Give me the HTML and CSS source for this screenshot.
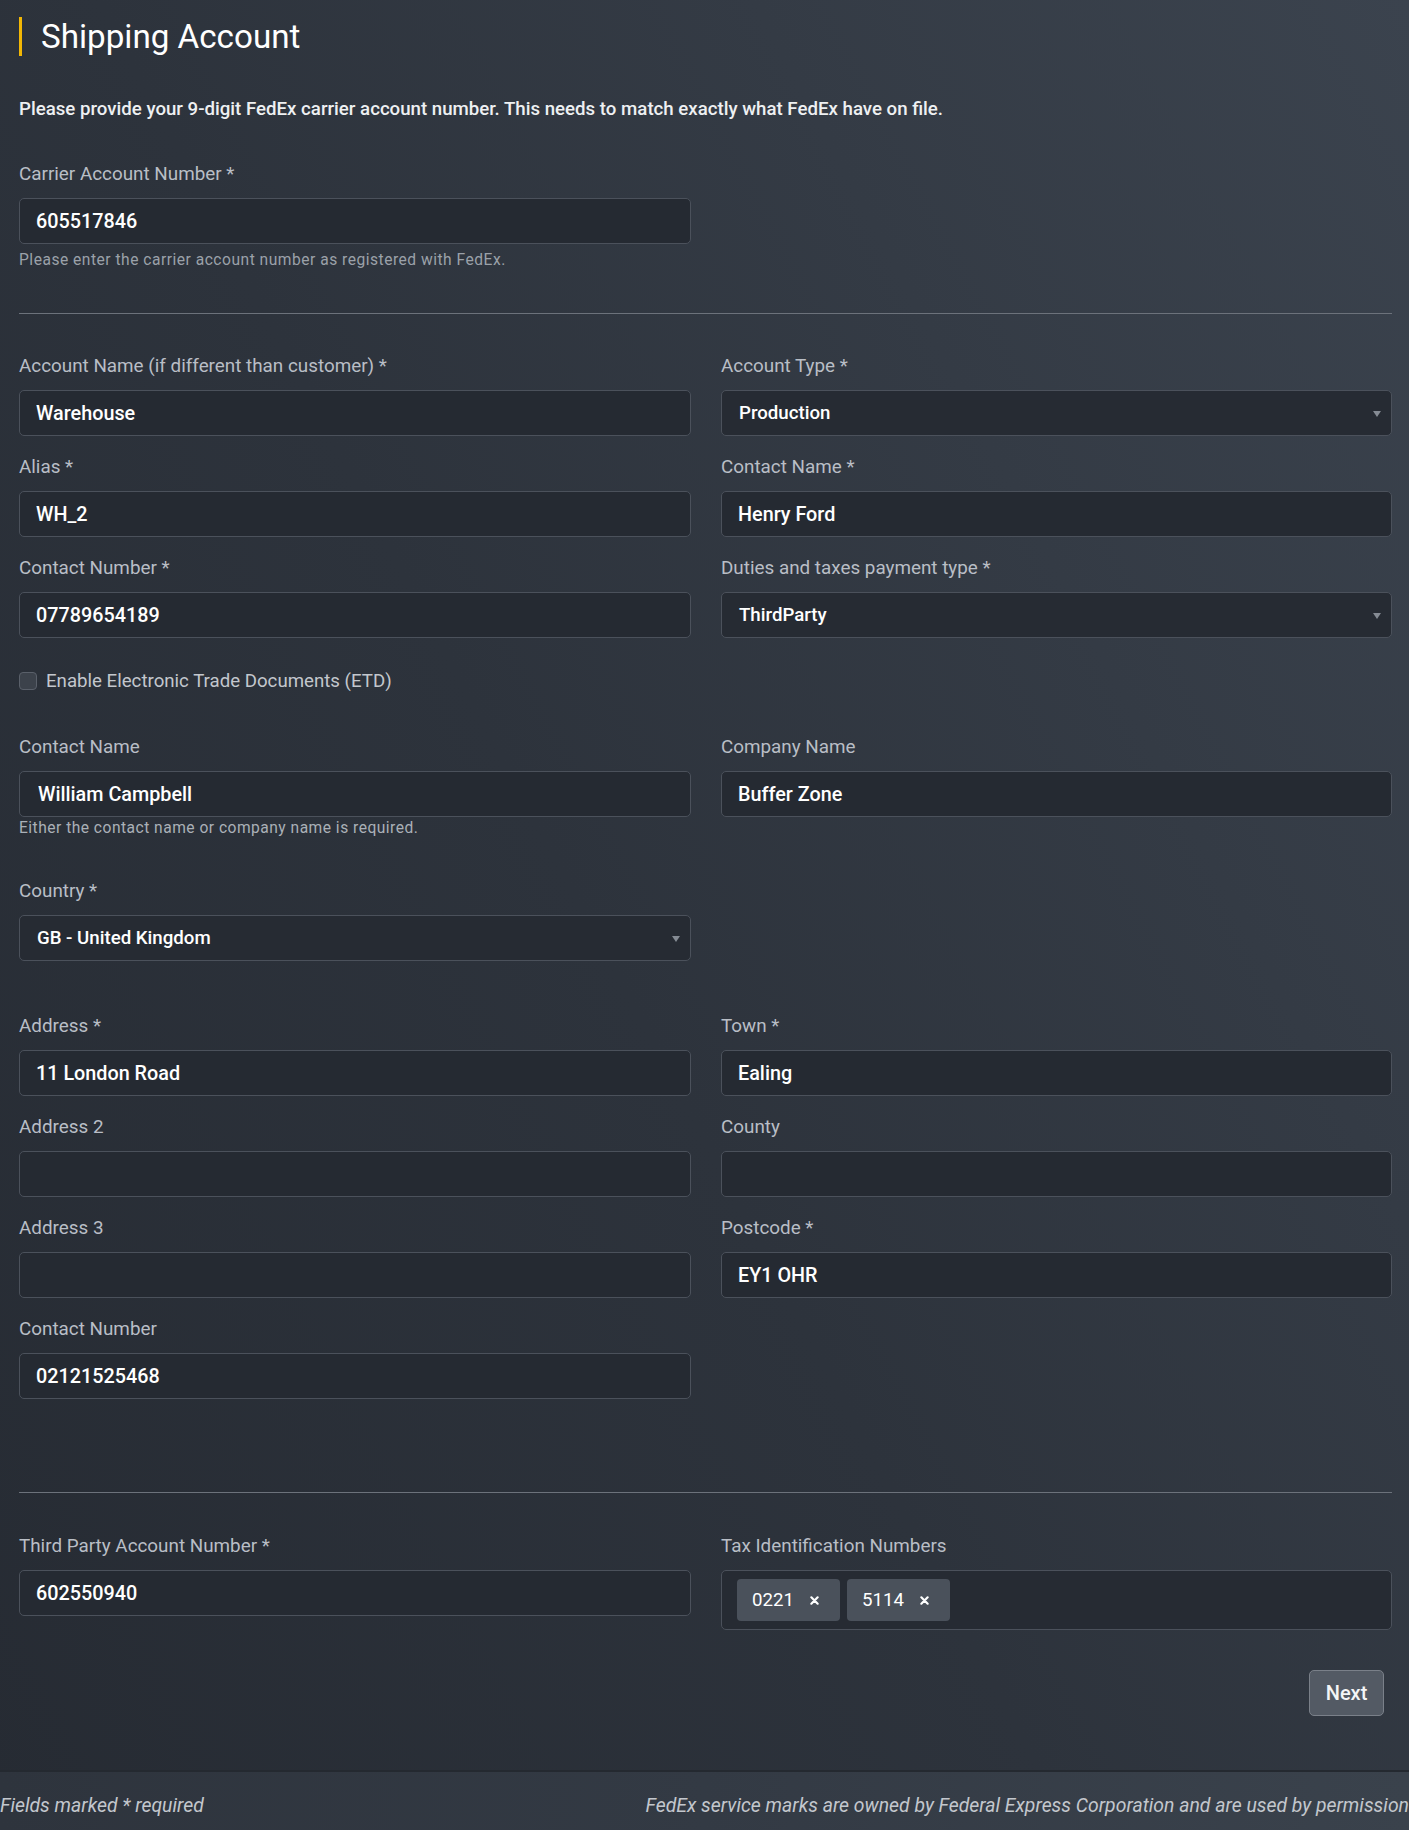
FILE: index.html
```html
<!DOCTYPE html>
<html>
	<head>
		<meta charset="UTF-8">
		<title>Shipping Account</title>
		<link rel="stylesheet" href="styles.css">
	</head>
	<body>
		<div class="page">
			<h1 class="title">Shipping Account</h1>
			<p class="intro">Please provide your 9-digit FedEx carrier account number. This needs to match exactly what FedEx have on file.</p>

			<div class="field carrier">
				<label>Carrier Account Number *</label>
				<input class="input" type="text" value="605517846">
				<div class="help">Please enter the carrier account number as registered with FedEx.</div>
			</div>

			<hr class="rule">

			<div class="grid rows">
				<div class="field">
					<label>Account Name (if different than customer) *</label>
					<input class="input" type="text" value="Warehouse">
				</div>
				<div class="field">
					<label>Account Type *</label>
					<div class="select"><span>Production</span></div>
				</div>
				<div class="field">
					<label>Alias *</label>
					<input class="input" type="text" value="WH_2">
				</div>
				<div class="field">
					<label>Contact Name *</label>
					<input class="input" type="text" value="Henry Ford">
				</div>
				<div class="field">
					<label>Contact Number *</label>
					<input class="input" type="text" value="07789654189">
				</div>
				<div class="field">
					<label>Duties and taxes payment type *</label>
					<div class="select"><span>ThirdParty</span></div>
				</div>
			</div>

			<label class="check"><span class="box"></span>Enable Electronic Trade Documents (ETD)</label>

			<div class="grid contact">
				<div class="field">
					<label>Contact Name</label>
					<input class="input input_indent" type="text" value="William Campbell">
					<div class="help help_tight">Either the contact name or company name is required.</div>
				</div>
				<div class="field">
					<label>Company Name</label>
					<input class="input" type="text" value="Buffer Zone">
				</div>
			</div>

			<div class="grid country">
				<div class="field">
					<label>Country *</label>
					<div class="select"><span>GB - United Kingdom</span></div>
				</div>
			</div>

			<div class="grid rows address">
				<div class="field">
					<label>Address *</label>
					<input class="input" type="text" value="11 London Road">
				</div>
				<div class="field">
					<label>Town *</label>
					<input class="input" type="text" value="Ealing">
				</div>
				<div class="field">
					<label>Address 2</label>
					<input class="input" type="text" value="">
				</div>
				<div class="field">
					<label>County</label>
					<input class="input" type="text" value="">
				</div>
				<div class="field">
					<label>Address 3</label>
					<input class="input" type="text" value="">
				</div>
				<div class="field">
					<label>Postcode *</label>
					<input class="input" type="text" value="EY1 OHR">
				</div>
				<div class="field">
					<label>Contact Number</label>
					<input class="input" type="text" value="02121525468">
				</div>
			</div>

			<hr class="rule rule_low">

			<div class="grid third">
				<div class="field">
					<label>Third Party Account Number *</label>
					<input class="input" type="text" value="602550940">
				</div>
				<div class="field">
					<label>Tax Identification Numbers</label>
					<div class="tags">
						<span class="tag">0221<svg width="9" height="9" viewBox="0 0 10 10"><path d="M1.5 1.5L8.5 8.5M8.5 1.5L1.5 8.5" stroke="#fff" stroke-width="2.4" stroke-linecap="round"/></svg></span>
						<span class="tag">5114<svg width="9" height="9" viewBox="0 0 10 10"><path d="M1.5 1.5L8.5 8.5M8.5 1.5L1.5 8.5" stroke="#fff" stroke-width="2.4" stroke-linecap="round"/></svg></span>
					</div>
				</div>
			</div>

			<div class="actions">
				<button class="btn" type="button">Next</button>
			</div>
		</div>
		<footer class="foot">
			<span>Fields marked * required</span>
			<span>FedEx service marks are owned by Federal Express Corporation and are used by permission</span>
		</footer>
	</body>
</html>
```

FILE: styles.css
```css
*{
	margin: 0;
	padding: 0;
	box-sizing: border-box;
}
html,body{
	width: 1409px;
	height: 1830px;
	overflow: hidden;
}
body{
	font-family: Roboto, "Liberation Sans", sans-serif;
	color: #fff;
	background: linear-gradient(62deg, #262b33 0%, #2d333c 45%, #3b434e 100%);
}
.page{
	padding: 17px 17px 0 19px;
}
.title{
	height: 39px;
	line-height: 39px;
	border-left: 3px solid #f2b705;
	padding-left: 19px;
	font-size: 33.2px;
	font-weight: 400;
	color: #fff;
}
.intro{
	margin-top: 38.5px;
	line-height: 28px;
	font-size: 18.67px;
	font-weight: 500;
	color: #eef0f2;
}
.field label{
	display: block;
	height: 28px;
	line-height: 28px;
	margin-bottom: 10px;
	font-size: 18.85px;
	color: #b9bec6;
}
.carrier{
	margin-top: 37.5px;
	width: 672px;
}
.input{
	display: block;
	width: 100%;
	height: 46px;
	padding: 0 16px;
	border: 1px solid #4b515b;
	border-radius: 5px;
	background: #252a32;
	color: #fff;
	font-family: Roboto, "Liberation Sans", sans-serif;
	font-size: 19.8px;
	font-weight: 500;
	outline: none;
}
.input_indent{
	padding-left: 18px;
}
.help{
	margin-top: 4px;
	line-height: 24px;
	font-size: 15.6px;
	letter-spacing: 0.5px;
	color: #9ba1a9;
}
.help_tight{
	margin-top: 0;
	line-height: 22px;
	letter-spacing: 0.48px;
	color: #aab0b7;
}
.rule{
	margin-top: 40.5px;
	border: 0;
	border-top: 1px solid #6c727b;
}
.rule_low{
	margin-top: 93px;
}
.grid{
	display: grid;
	grid-template-columns: 672px 671px;
	column-gap: 30px;
	row-gap: 17px;
	align-items: start;
}
.rows{
	margin-top: 38.5px;
}
.select{
	position: relative;
	height: 46px;
	padding: 0 17px;
	border: 1px solid #4b515b;
	border-radius: 5px;
	background: #262b33;
	line-height: 44px;
	font-size: 18.67px;
	font-weight: 500;
	color: #fff;
}
.select::after{
	content: "";
	position: absolute;
	right: 10px;
	top: 20px;
	border-left: 4px solid transparent;
	border-right: 4px solid transparent;
	border-top: 6px solid #858b94;
}
.check{
	display: flex;
	align-items: center;
	height: 28px;
	margin-top: 29px;
	font-size: 18.67px;
	color: #c3c7cd;
}
.box{
	width: 18px;
	height: 18px;
	margin-right: 9px;
	border: 1px solid #5a606a;
	border-radius: 4px;
	background: #3c424b;
}
.contact{
	margin-top: 38px;
}
.country{
	margin-top: 38px;
}
.address{
	margin-top: 51px;
}
.third{
	margin-top: 39px;
}
.tags{
	display: flex;
	gap: 7px;
	height: 60px;
	padding: 8px 15px;
	border: 1px solid #4b515b;
	border-radius: 5px;
	background: #262b33;
}
.tag{
	display: flex;
	align-items: center;
	height: 42px;
	padding: 0 21px 0 15px;
	border-radius: 4px;
	background: #4a515b;
	font-size: 18.67px;
	font-weight: 400;
	color: #fff;
}
.tag svg{
	margin-left: 16px;
}
.actions{
	display: flex;
	justify-content: flex-end;
	margin-top: 40px;
	padding-right: 8px;
}
.btn{
	width: 75px;
	height: 46px;
	border: 1px solid #7a8089;
	border-radius: 5px;
	background: #535a64;
	color: #f4f5f6;
	font-family: Roboto, "Liberation Sans", sans-serif;
	font-size: 20px;
	font-weight: 500;
}
.foot{
	display: flex;
	justify-content: space-between;
	margin-top: 54px;
	height: 60px;
	padding-top: 20px;
	border-top: 2px solid #242930;
	background: linear-gradient(90deg, #2e343d 0%, #333a44 50%, #3a424c 100%);
	line-height: 28px;
	font-size: 19.4px;
	font-style: italic;
	color: #c3c7cd;
	white-space: nowrap;
}
```
